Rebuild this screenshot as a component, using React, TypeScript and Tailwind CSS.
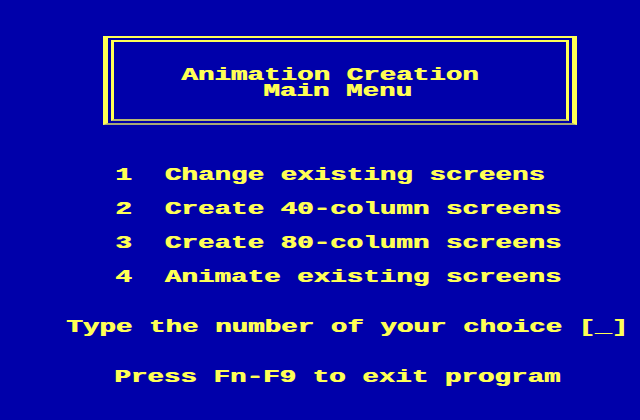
import React from "react";

// One row of text-mode characters: Liberation Mono stretched to a wide 40-column cell.
function Row({ text, className = "" }: { text: string; className?: string }) {
  return (
    <div className={`h-[16px] leading-[16px] whitespace-pre ${className}`}>
      <span className="inline-block origin-left scale-x-[1.53] text-[18px] font-bold text-[#ffff55] [text-shadow:0.6px_0_0_#ffff55] font-['Liberation_Mono',monospace]">
        {text}
      </span>
    </div>
  );
}

const options = [
  "1  Change existing screens",
  "2  Create 40-column screens",
  "3  Create 80-column screens",
  "4  Animate existing screens",
];

export default function App() {
  return (
    <div className="w-[640px] h-[420px] bg-[#0000aa] overflow-hidden flex flex-col pt-[36px]">
      {/* double-line title frame */}
      <div className="ml-[103px] w-[474px] h-[89px] border-t-2 border-b-2 border-l-[5px] border-r-[5px] border-t-[#ffff55] border-l-[#ffff55] border-r-[#ffff55] border-b-[#a8a878] px-[3px] pt-[2px] pb-[2px] flex">
        <div className="flex-1 border-t-2 border-b-2 border-l-[3px] border-r-[3px] border-t-[#ffff55] border-l-[#ffff55] border-r-[#ffff55] border-b-[#b8b870] flex flex-col">
          <Row text="Animation Creation" className="mt-[24px] ml-[67px]" />
          <Row text="Main Menu" className="ml-[149px]" />
        </div>
      </div>

      <div className="flex flex-col gap-[18px] mt-[41px] pl-[115px]">
        {options.map((o) => (
          <Row key={o} text={o} />
        ))}
      </div>

      <Row text="Type the number of your choice [_]" className="mt-[34px] pl-[66px]" />
      <Row text="Press Fn-F9 to exit program" className="mt-[34px] pl-[114px]" />
    </div>
  );
}
